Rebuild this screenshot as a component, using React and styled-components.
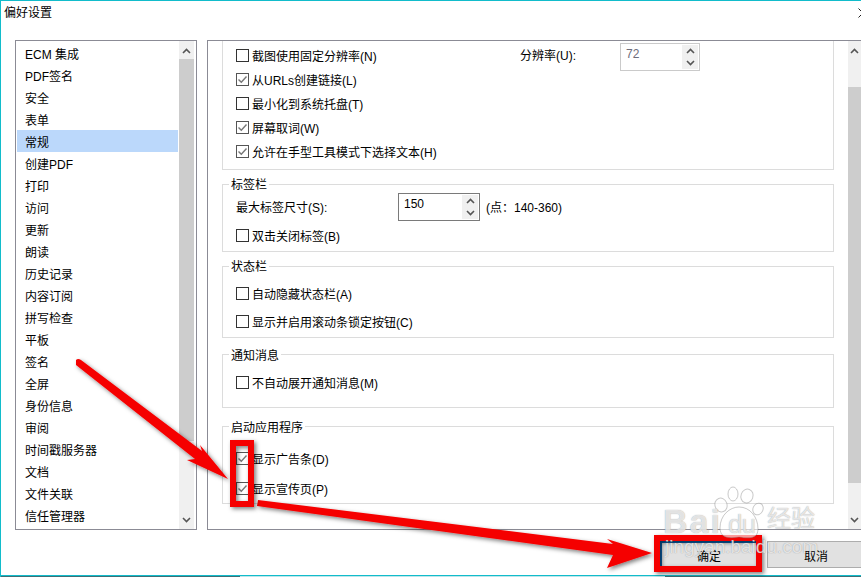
import React from 'react';
import styled, { createGlobalStyle } from 'styled-components';

const Global = createGlobalStyle`
  html, body { margin: 0; padding: 0; background: #fff; }
  body { font-family: "Liberation Sans", "Noto Sans CJK SC", sans-serif; font-size: 12px; color: #000; }
`;

const Dialog = styled.div`
  position: relative;
  width: 861px;
  height: 577px;
  box-sizing: border-box;
  border-top: 1px solid #12bccb;
  border-left: 1px solid #12bccb;
  overflow: hidden;
  display: flex;
  flex-direction: column;
  background: #fff;
`;

const TitleBar = styled.div`
  height: 39px;
  flex: none;
  display: flex;
  justify-content: space-between;
  padding: 4px 0 0 3px;
  box-sizing: border-box;
  line-height: 16px;
`;
const Close = styled.svg`
  margin: 3px -7px 0 0;
`;

const Body = styled.div`
  height: 490px;
  flex: none;
  display: flex;
  padding-left: 14px;
  gap: 10px;
`;

const ListBox = styled.div`
  width: 182px;
  box-sizing: border-box;
  border: 1px solid #8b8b95;
  display: flex;
  padding-right: 2px;
`;
const List = styled.ul`
  list-style: none;
  margin: 0;
  padding: 1px 1px 0 1px;
  flex: 1;
`;
const Item = styled.li`
  height: 22px;
  box-sizing: border-box;
  padding: 2px 0 0 8px;
  line-height: 22px;
  white-space: nowrap;
  background: ${p => (p.$active ? '#bbd8fb' : 'transparent')};
`;

const Track = styled.div`
  width: ${p => p.$w}px;
  flex: none;
  background: #f0f0f0;
  display: flex;
  flex-direction: column;
`;
const Arrow = styled.div`
  height: ${p => p.$h}px;
  flex: none;
  display: flex;
  justify-content: center;
  padding-top: ${p => p.$top}px;
  box-sizing: border-box;
`;
const Thumb = styled.div`
  height: ${p => p.$h}px;
  flex: none;
  background: #cdcdcd;
`;
const Grow = styled.div`
  flex: 1;
`;

const Panel = styled.div`
  flex: 1;
  display: flex;
  box-sizing: border-box;
  border: 1px solid #8b8b95;
  border-right: none;
  min-width: 0;
`;
const Content = styled.div`
  flex: 1;
  padding: 0 14px 0 14px;
  overflow: hidden;
`;

const Group = styled.section`
  position: relative;
  box-sizing: border-box;
  height: ${p => p.$h}px;
  margin-top: ${p => p.$mt || 0}px;
  border: 1px solid #dcdcdc;
  ${p => p.$open && 'border-top: none;'}
  padding-top: ${p => p.$pt}px;
  padding-left: 13px;
`;
const Legend = styled.span`
  position: absolute;
  left: 6px;
  top: ${p => p.$top || -8}px;
  background: #fff;
  padding: 0 2px;
  line-height: 16px;
`;
const Row = styled.div`
  display: flex;
  align-items: center;
  height: ${p => p.$h || 24}px;
`;
const Box = styled.span`
  width: 13px;
  height: 13px;
  box-sizing: border-box;
  border: 1px solid ${p => (p.$checked ? '#555' : '#333')};
  flex: none;
  margin-right: 3px;
  display: flex;
  align-items: center;
  justify-content: center;
`;
const FieldLabel = styled.span`
  width: ${p => p.$w}px;
  flex: none;
  margin-top: -2px;
`;
const SpinBox = styled.div`
  width: ${p => p.$w}px;
  height: 28px;
  flex: none;
  box-sizing: border-box;
  border: 1px solid ${p => (p.$disabled ? '#cacaca' : '#7a7a7a')};
  color: ${p => (p.$disabled ? '#6d6d7b' : '#000')};
  display: flex;
  justify-content: space-between;
  padding: 1px 1px 1px 5px;
  line-height: 18px;
`;
const Spin = styled.div`
  width: 16px;
  background: #f0f0f0;
  display: flex;
  flex-direction: column;
  align-items: center;
  justify-content: space-around;
`;
const Hint = styled.span`
  margin: -2px 0 0 6px;
`;

const Footer = styled.div`
  flex: 1;
  display: flex;
  padding: 11px 0 0 659px;
  gap: 9px;
  box-sizing: border-box;
  border-bottom: 1px solid #12bccb;
`;
const Strip = styled.div`
  height: 1px;
  flex: none;
  background: linear-gradient(90deg, #3f6f75 0 239px, #bfe6ea 239px 664px, #3f6f75 664px);
`;
const Button = styled.button`
  width: ${p => p.$w}px;
  height: ${p => p.$h}px;
  flex: none;
  box-sizing: border-box;
  background: #e1e1e1;
  border: ${p => (p.$primary ? '2px solid #0a5fa8' : '1px solid #adadad')};
  font: inherit;
  color: #000;
  padding: 1px 0 0;
`;

const Overlay = styled.svg`
  position: absolute;
  left: -1px;
  top: -1px;
  pointer-events: none;
`;
const Mark = styled.div`
  position: absolute;
  left: ${p => p.$l}px;
  top: ${p => p.$t}px;
  font-size: ${p => p.$s}px;
  font-weight: ${p => p.$b || 400};
  line-height: 1;
  color: rgba(255, 255, 255, 0.72);
  text-shadow: 0 0 1px rgba(110, 110, 110, 0.7);
  letter-spacing: ${p => p.$ls || 0}px;
  white-space: nowrap;
  pointer-events: none;
`;

const Up = () => (
  <svg width="9" height="6" viewBox="0 0 9 6"><path d="M1 5 L4.5 1.5 L8 5" fill="none" stroke="#555" strokeWidth="1.6" /></svg>
);
const Down = () => (
  <svg width="9" height="6" viewBox="0 0 9 6"><path d="M1 1 L4.5 4.5 L8 1" fill="none" stroke="#555" strokeWidth="1.6" /></svg>
);
const Tick = () => (
  <svg width="11" height="11" viewBox="0 0 11 11"><path d="M1.5 5.5 L4.3 8.3 L9.5 2.5" fill="none" stroke="#777" strokeWidth="1.4" /></svg>
);

const Check = ({ checked, children, h }) => (
  <Row $h={h}>
    <Box $checked={checked}>{checked && <Tick />}</Box>
    <span>{children}</span>
  </Row>
);

const Spinner = ({ value, disabled, w }) => (
  <SpinBox $disabled={disabled} $w={w}>
    <span>{value}</span>
    <Spin><Up /><Down /></Spin>
  </SpinBox>
);

const items = ['ECM 集成','PDF签名','安全','表单','常规','创建PDF','打印','访问','更新','朗读','历史记录','内容订阅','拼写检查','平板','签名','全屏','身份信息','审阅','时间戳服务器','文档','文件关联','信任管理器'];

const FirstRows = styled.div`
  position: relative;
`;
const Floating = styled.div`
  position: absolute;
  left: 284px;
  top: 0;
  display: flex;
  align-items: flex-start;
`;
const ResLabel = styled.span`
  width: 100px;
  padding-top: 5px;
  line-height: 16px;
`;

export default function App() {
  return (
    <Dialog>
      <Global />
      <TitleBar>
        <span>偏好设置</span>
        <Close width="10" height="10" viewBox="0 0 10 10"><path d="M0.5 0.5 L9.5 9.5 M9.5 0.5 L0.5 9.5" stroke="#222" fill="none" /></Close>
      </TitleBar>
      <Body>
        <ListBox>
          <List>
            {items.map((t, i) => <Item key={t} $active={i === 4}>{t}</Item>)}
          </List>
          <Track $w={15}>
            <Arrow $h={18} $top={7}><Up /></Arrow>
            <Thumb $h={382} />
            <Grow />
            <Arrow $h={18} $top={6}><Down /></Arrow>
          </Track>
        </ListBox>
        <Panel>
          <Content>
            <Group $open $h={129} $pt={2}>
              <FirstRows>
                <Check>截图使用固定分辨率(N)</Check>
                <Check checked>从URLs创建链接(L)</Check>
                <Check>最小化到系统托盘(T)</Check>
                <Check checked>屏幕取词(W)</Check>
                <Check checked>允许在手型工具模式下选择文本(H)</Check>
                <Floating>
                  <ResLabel>分辨率(U):</ResLabel>
                  <Spinner value="72" disabled w={80} />
                </Floating>
              </FirstRows>
            </Group>
            <Group $mt={14} $h={68} $pt={8}>
              <Legend>标签栏</Legend>
              <Row $h={28}>
                <FieldLabel $w={162}>最大标签尺寸(S):</FieldLabel>
                <Spinner value="150" w={82} />
                <Hint>(点：140-360)</Hint>
              </Row>
              <Check h={28}>双击关闭标签(B)</Check>
            </Group>
            <Group $mt={14} $h={72} $pt={12}>
              <Legend>状态栏</Legend>
              <Check h={28}>自动隐藏状态栏(A)</Check>
              <Check h={28}>显示并启用滚动条锁定按钮(C)</Check>
            </Group>
            <Group $mt={16} $h={54} $pt={15}>
              <Legend $top={-7}>通知消息</Legend>
              <Check>不自动展开通知消息(M)</Check>
            </Group>
            <Group $mt={18} $h={78} $pt={16}>
              <Legend $top={-7}>启动应用程序</Legend>
              <Check checked h={30}>显示广告条(D)</Check>
              <Check checked h={30}>显示宣传页(P)</Check>
            </Group>
          </Content>
          <Track $w={13}>
            <Arrow $h={46} $top={7}><Up /></Arrow>
            <Thumb $h={396} />
            <Grow />
            <Arrow $h={18} $top={6}><Down /></Arrow>
          </Track>
        </Panel>
      </Body>
      <Footer>
        <Button $primary $w={98} $h={28}>确定</Button>
        <Button $w={98} $h={27}>取消</Button>
      </Footer>
      <Strip />

      <Overlay width="861" height="577" viewBox="0 0 861 577">
        <defs>
          <filter id="sh" x="-10%" y="-10%" width="125%" height="125%">
            <feDropShadow dx="2" dy="2" stdDeviation="2" floodColor="#000" floodOpacity="0.5" />
          </filter>
        </defs>
        <g fill="#f50000" filter="url(#sh)">
          <path d="M76 360 Q78 358 81 360 L202 451 L200 445 L228 479 L187 460 L195 459 L76 365 Z" />
          <path d="M258 500 L613 544 L607 539 L652 553 L607 568 L613 555 L257 506 Z" />
        </g>
        <g fill="none" stroke="#f50000" strokeWidth="6" filter="url(#sh)">
          <rect x="233" y="443" width="18" height="61" />
          <rect x="657" y="538" width="102" height="31" />
        </g>
        <g fill="rgba(255,255,255,.6)" stroke="rgba(120,120,120,.4)" strokeWidth="1">
          <ellipse cx="721" cy="505" rx="6" ry="7" transform="rotate(-20 721 505)" />
          <ellipse cx="733" cy="494" rx="5" ry="7" />
          <ellipse cx="747" cy="496" rx="6" ry="7" transform="rotate(20 747 496)" />
          <ellipse cx="758" cy="509" rx="5" ry="6" transform="rotate(25 758 509)" />
          <path d="M720 528 C720 515 730 507 739 507 C750 507 758 517 758 529 C758 538 751 539 739 537 C727 539 720 537 720 528 Z" />
        </g>
      </Overlay>
      <Mark $l={662} $t={503} $s={34} $b={700} $ls={2}>Bai</Mark>
      <Mark $l={727} $t={510} $s={26} $ls={-1}>du</Mark>
      <Mark $l={766} $t={506} $s={24}>经验</Mark>
      <Mark $l={664} $t={536} $s={19}>jingyan.baidu.com</Mark>
    </Dialog>
  );
}
